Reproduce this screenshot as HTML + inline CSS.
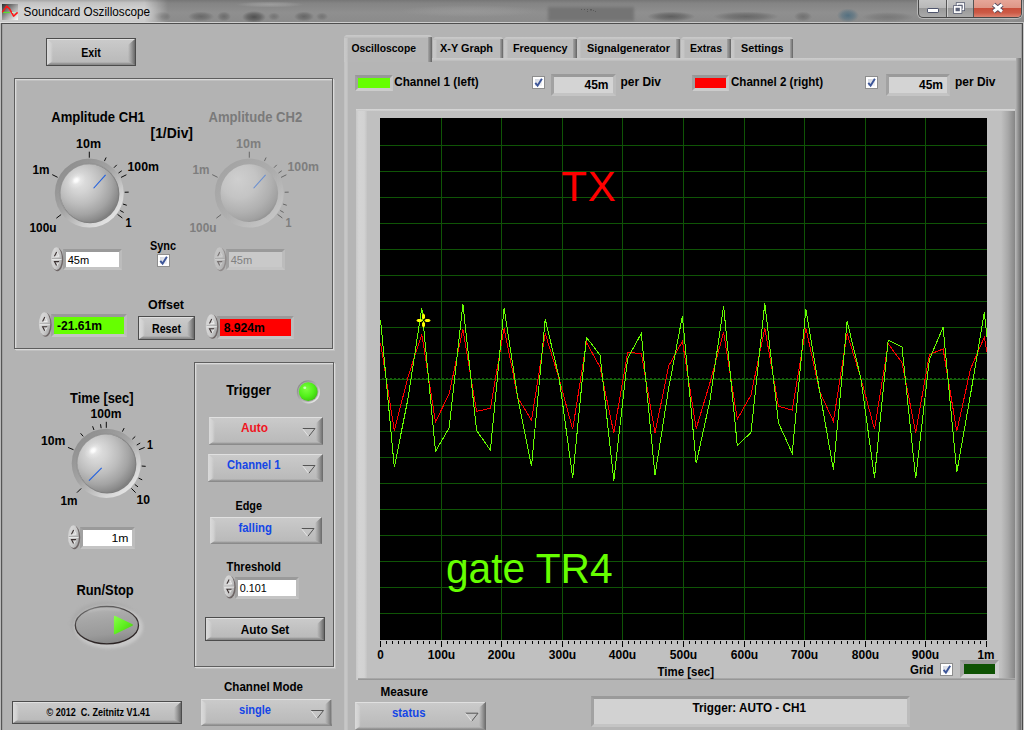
<!DOCTYPE html>
<html lang="en"><head><meta charset="utf-8"><title>Soundcard Oszilloscope</title>
<style>
html,body{margin:0;padding:0}
body{width:1024px;height:730px;position:relative;overflow:hidden;background:#b3b3b3;font-family:"Liberation Sans",sans-serif}
div,i{position:absolute;display:block;box-sizing:content-box}
svg{position:absolute;left:0;top:0}
svg text{font-family:"Liberation Sans",sans-serif;white-space:pre}
</style></head><body>
<div style="left:0px;top:0px;width:1024px;height:23px;background:radial-gradient(ellipse 9px 5px at 162px 16.5px,rgba(80,80,80,0.55) 0,rgba(80,80,80,0.33) 55%,rgba(80,80,80,0) 100%),radial-gradient(ellipse 13px 5px at 201px 16.5px,rgba(80,80,80,0.6) 0,rgba(80,80,80,0.36) 55%,rgba(80,80,80,0) 100%),radial-gradient(ellipse 7px 5px at 224px 16.5px,rgba(80,80,80,0.55) 0,rgba(80,80,80,0.33) 55%,rgba(80,80,80,0) 100%),radial-gradient(ellipse 12px 6px at 254px 17px,rgba(60,60,60,0.75) 0,rgba(60,60,60,0.45) 55%,rgba(60,60,60,0) 100%),radial-gradient(ellipse 6px 4px at 274px 16.5px,rgba(85,85,85,0.45) 0,rgba(85,85,85,0.27) 55%,rgba(85,85,85,0) 100%),radial-gradient(ellipse 10px 5px at 304px 16.5px,rgba(75,75,75,0.6) 0,rgba(75,75,75,0.36) 55%,rgba(75,75,75,0) 100%),radial-gradient(ellipse 6px 4px at 322px 16.5px,rgba(85,85,85,0.45) 0,rgba(85,85,85,0.27) 55%,rgba(85,85,85,0) 100%),radial-gradient(ellipse 34px 3px at 270px 4.5px,rgba(175,175,175,0.55) 0,rgba(175,175,175,0.33) 55%,rgba(175,175,175,0) 100%),radial-gradient(ellipse 70px 6px at 470px 11px,rgba(165,165,165,0.4) 0,rgba(165,165,165,0.24) 55%,rgba(165,165,165,0) 100%),radial-gradient(ellipse 24px 5px at 671px 16.5px,rgba(70,70,70,0.65) 0,rgba(70,70,70,0.39) 55%,rgba(70,70,70,0) 100%),radial-gradient(ellipse 33px 5px at 746px 16.5px,rgba(78,78,78,0.6) 0,rgba(78,78,78,0.36) 55%,rgba(78,78,78,0) 100%),radial-gradient(ellipse 9px 5px at 803px 16.5px,rgba(85,85,85,0.5) 0,rgba(85,85,85,0.30) 55%,rgba(85,85,85,0) 100%),radial-gradient(ellipse 11px 7px at 848px 15.5px,rgba(70,105,125,0.8) 0,rgba(70,105,125,0.48) 55%,rgba(70,105,125,0) 100%),radial-gradient(ellipse 26px 5px at 888px 17px,rgba(95,95,95,0.45) 0,rgba(95,95,95,0.27) 55%,rgba(95,95,95,0) 100%),radial-gradient(ellipse 12px 8px at 1010px 14px,rgba(170,170,170,0.5) 0,rgba(170,170,170,0.30) 55%,rgba(170,170,170,0) 100%),linear-gradient(180deg,#767676 0,#848484 14%,#8f8f8f 55%,#8a8a8a 100%);"></div>
<div style="left:548px;top:7px;width:86px;height:14px;background:#727272;filter:blur(1.6px);opacity:.9;"></div>
<div style="left:0px;top:0px;width:168px;height:23px;background:linear-gradient(180deg,#a6a6a6 0,#c2c2c2 12%,#d2d2d2 40%,#d0d0d0 80%,#c8c8c8 100%);-webkit-mask-image:linear-gradient(90deg,#000 0,#000 86%,rgba(0,0,0,.5) 93%,transparent 100%);mask-image:linear-gradient(90deg,#000 0,#000 86%,rgba(0,0,0,.5) 93%,transparent 100%);"></div>
<div style="left:0px;top:22px;width:1024px;height:1px;background:linear-gradient(90deg,#e2e2e2,#cfcfcf 20%,#c4c4c4);"></div>
<div style="left:1px;top:23px;width:1022px;height:1px;background:#4e4e4e;"></div>
<div style="left:0px;top:23px;width:1px;height:707px;background:#bababa;"></div>
<div style="left:1px;top:23px;width:1px;height:707px;background:#555;"></div>
<div style="left:2px;top:24px;width:1px;height:706px;background:#a2a2a2;"></div>
<div style="left:1021px;top:24px;width:1px;height:706px;background:#9c9c9c;"></div>
<div style="left:1022px;top:23px;width:1px;height:707px;background:#4a4a4a;"></div>
<div style="left:1023px;top:23px;width:1px;height:707px;background:#cbcbcb;"></div>
<div style="left:2px;top:4px;width:16px;height:16px;background:linear-gradient(135deg,#2c2c2c 0,#6e6e6e 30%,#a8a8a8 55%,#d8d8d8 80%,#fafafa 100%);"></div>
<div style="left:918px;top:0px;width:102px;height:17px;border:1px solid #484848;border-top:none;border-radius:0 0 5px 5px;overflow:hidden;background:linear-gradient(180deg,#c4c4c4 0,#b8b8b8 46%,#989898 48%,#aaaaaa 100%);box-shadow:0 0 0 1px rgba(220,220,220,.55);"><i style="left:27px;top:0;width:1px;height:17px;background:#555"></i><i style="left:28px;top:0;width:1px;height:17px;background:rgba(230,230,230,.6)"></i><i style="left:54px;top:0;width:1px;height:17px;background:#555"></i><i style="left:55px;top:0;width:47px;height:17px;background:linear-gradient(180deg,#e6a698 0,#de9686 46%,#c84e3a 48%,#cc5a46 75%,#dc8270 100%)"></i></div>
<div style="left:46px;top:38px;width:88px;height:26px;border:1px solid #4c4c4c;overflow:hidden;"><i style="left:0;top:0;width:88px;height:26px;background:linear-gradient(180deg,#cbcbcb 0,#c2c2c2 45%,#b8b8b8 100%)"></i><i style="left:0;bottom:0;width:88px;height:3px;background:linear-gradient(180deg,rgba(150,150,150,0),#929292 60%,#868686)"></i><i style="left:0;top:0;width:88px;height:1px;background:#e0e0e0"></i><i style="left:0;top:0;width:6px;height:26px;background:linear-gradient(90deg,#dadada,#d2d2d2 55%,rgba(200,200,200,0));clip-path:polygon(0 0,100% 5px,100% calc(100% - 4px),0 100%)"></i><i style="right:0;top:0;width:7px;height:26px;background:linear-gradient(90deg,rgba(176,176,176,0),#9c9c9c 45%,#686868);clip-path:polygon(100% 0,0 6px,0 calc(100% - 4px),100% 100%)"></i></div>
<div style="left:14px;top:78px;width:317px;height:269px;border:1px solid #5e5e5e;box-shadow:1px 1px 0 #dadada, 2px 2px 0 rgba(218,218,218,.35), inset 1px 1px 0 #dadada, inset 2px 2px 0 rgba(218,218,218,.35);"></div>
<div style="left:63px;top:249px;width:52.5px;height:15px;border:3px solid;border-color:#9a9a9a #bcbcbc #c4c4c4 #a2a2a2;background:#fff;"></div>
<div style="left:157px;top:254px;width:11px;height:11px;border:1px solid #8e8e8e;background:#fff;"><i style="left:2px;top:2px;right:2px;bottom:2px;background:linear-gradient(135deg,#d4d8e2,#f4f4f6)"></i></div>
<div style="left:226px;top:249px;width:52.5px;height:15px;border:3px solid;border-color:#9a9a9a #bcbcbc #c4c4c4 #a2a2a2;background:#c9c9c9;"></div>
<div style="left:50.5px;top:313.5px;width:70.7px;height:17.3px;border:3.5px solid;border-color:#9a9a9a #bcbcbc #c4c4c4 #a2a2a2;background:#66ff00;"></div>
<div style="left:138px;top:316px;width:55px;height:22px;border:1px solid #4c4c4c;overflow:hidden;"><i style="left:0;top:0;width:55px;height:22px;background:linear-gradient(180deg,#cbcbcb 0,#c2c2c2 45%,#b8b8b8 100%)"></i><i style="left:0;bottom:0;width:55px;height:3px;background:linear-gradient(180deg,rgba(150,150,150,0),#929292 60%,#868686)"></i><i style="left:0;top:0;width:55px;height:1px;background:#e0e0e0"></i><i style="left:0;top:0;width:6px;height:22px;background:linear-gradient(90deg,#dadada,#d2d2d2 55%,rgba(200,200,200,0));clip-path:polygon(0 0,100% 5px,100% calc(100% - 4px),0 100%)"></i><i style="right:0;top:0;width:7px;height:22px;background:linear-gradient(90deg,rgba(176,176,176,0),#9c9c9c 45%,#686868);clip-path:polygon(100% 0,0 6px,0 calc(100% - 4px),100% 100%)"></i></div>
<div style="left:217.2px;top:315.5px;width:70.5px;height:17.0px;border:3.5px solid;border-color:#9a9a9a #bcbcbc #c4c4c4 #a2a2a2;background:#ff0000;"></div>
<div style="left:80px;top:526.5px;width:48.5px;height:16px;border:3px solid;border-color:#9a9a9a #bcbcbc #c4c4c4 #a2a2a2;background:#fff;"></div>
<div style="left:12px;top:701px;width:168px;height:21px;border:1px solid #4c4c4c;overflow:hidden;"><i style="left:0;top:0;width:168px;height:21px;background:linear-gradient(180deg,#cbcbcb 0,#c2c2c2 45%,#b8b8b8 100%)"></i><i style="left:0;bottom:0;width:168px;height:3px;background:linear-gradient(180deg,rgba(150,150,150,0),#929292 60%,#868686)"></i><i style="left:0;top:0;width:168px;height:1px;background:#e0e0e0"></i><i style="left:0;top:0;width:6px;height:21px;background:linear-gradient(90deg,#dadada,#d2d2d2 55%,rgba(200,200,200,0));clip-path:polygon(0 0,100% 5px,100% calc(100% - 4px),0 100%)"></i><i style="right:0;top:0;width:7px;height:21px;background:linear-gradient(90deg,rgba(176,176,176,0),#9c9c9c 45%,#686868);clip-path:polygon(100% 0,0 6px,0 calc(100% - 4px),100% 100%)"></i></div>
<div style="left:194px;top:362px;width:138px;height:303px;border:1px solid #5e5e5e;box-shadow:1px 1px 0 #dadada, 2px 2px 0 rgba(218,218,218,.35), inset 1px 1px 0 #dadada, inset 2px 2px 0 rgba(218,218,218,.35);"></div>
<div style="left:209px;top:417px;width:114px;height:27.5px;overflow:hidden;"><i style="left:0;top:0;width:114px;height:27.5px;background:linear-gradient(180deg,#cbcbcb 0,#c2c2c2 45%,#b8b8b8 100%)"></i><i style="left:0;bottom:0;width:114px;height:3px;background:linear-gradient(180deg,rgba(150,150,150,0),#929292 60%,#868686)"></i><i style="left:0;top:0;width:114px;height:1px;background:#e0e0e0"></i><i style="left:0;top:0;width:6px;height:27.5px;background:linear-gradient(90deg,#dadada,#d2d2d2 55%,rgba(200,200,200,0));clip-path:polygon(0 0,100% 5px,100% calc(100% - 4px),0 100%)"></i><i style="right:0;top:0;width:7px;height:27.5px;background:linear-gradient(90deg,rgba(176,176,176,0),#9c9c9c 45%,#686868);clip-path:polygon(100% 0,0 6px,0 calc(100% - 4px),100% 100%)"></i></div>
<div style="left:208px;top:454px;width:115px;height:27.5px;overflow:hidden;"><i style="left:0;top:0;width:115px;height:27.5px;background:linear-gradient(180deg,#cbcbcb 0,#c2c2c2 45%,#b8b8b8 100%)"></i><i style="left:0;bottom:0;width:115px;height:3px;background:linear-gradient(180deg,rgba(150,150,150,0),#929292 60%,#868686)"></i><i style="left:0;top:0;width:115px;height:1px;background:#e0e0e0"></i><i style="left:0;top:0;width:6px;height:27.5px;background:linear-gradient(90deg,#dadada,#d2d2d2 55%,rgba(200,200,200,0));clip-path:polygon(0 0,100% 5px,100% calc(100% - 4px),0 100%)"></i><i style="right:0;top:0;width:7px;height:27.5px;background:linear-gradient(90deg,rgba(176,176,176,0),#9c9c9c 45%,#686868);clip-path:polygon(100% 0,0 6px,0 calc(100% - 4px),100% 100%)"></i></div>
<div style="left:210px;top:517px;width:112px;height:27px;overflow:hidden;"><i style="left:0;top:0;width:112px;height:27px;background:linear-gradient(180deg,#cbcbcb 0,#c2c2c2 45%,#b8b8b8 100%)"></i><i style="left:0;bottom:0;width:112px;height:3px;background:linear-gradient(180deg,rgba(150,150,150,0),#929292 60%,#868686)"></i><i style="left:0;top:0;width:112px;height:1px;background:#e0e0e0"></i><i style="left:0;top:0;width:6px;height:27px;background:linear-gradient(90deg,#dadada,#d2d2d2 55%,rgba(200,200,200,0));clip-path:polygon(0 0,100% 5px,100% calc(100% - 4px),0 100%)"></i><i style="right:0;top:0;width:7px;height:27px;background:linear-gradient(90deg,rgba(176,176,176,0),#9c9c9c 45%,#686868);clip-path:polygon(100% 0,0 6px,0 calc(100% - 4px),100% 100%)"></i></div>
<div style="left:235px;top:576.5px;width:58px;height:16px;border:3px solid;border-color:#9a9a9a #bcbcbc #c4c4c4 #a2a2a2;background:#fff;"></div>
<div style="left:205px;top:617px;width:118px;height:22px;border:1px solid #4c4c4c;overflow:hidden;"><i style="left:0;top:0;width:118px;height:22px;background:linear-gradient(180deg,#cbcbcb 0,#c2c2c2 45%,#b8b8b8 100%)"></i><i style="left:0;bottom:0;width:118px;height:3px;background:linear-gradient(180deg,rgba(150,150,150,0),#929292 60%,#868686)"></i><i style="left:0;top:0;width:118px;height:1px;background:#e0e0e0"></i><i style="left:0;top:0;width:6px;height:22px;background:linear-gradient(90deg,#dadada,#d2d2d2 55%,rgba(200,200,200,0));clip-path:polygon(0 0,100% 5px,100% calc(100% - 4px),0 100%)"></i><i style="right:0;top:0;width:7px;height:22px;background:linear-gradient(90deg,rgba(176,176,176,0),#9c9c9c 45%,#686868);clip-path:polygon(100% 0,0 6px,0 calc(100% - 4px),100% 100%)"></i></div>
<div style="left:200.5px;top:699px;width:131px;height:27px;overflow:hidden;"><i style="left:0;top:0;width:131px;height:27px;background:linear-gradient(180deg,#cbcbcb 0,#c2c2c2 45%,#b8b8b8 100%)"></i><i style="left:0;bottom:0;width:131px;height:3px;background:linear-gradient(180deg,rgba(150,150,150,0),#929292 60%,#868686)"></i><i style="left:0;top:0;width:131px;height:1px;background:#e0e0e0"></i><i style="left:0;top:0;width:6px;height:27px;background:linear-gradient(90deg,#dadada,#d2d2d2 55%,rgba(200,200,200,0));clip-path:polygon(0 0,100% 5px,100% calc(100% - 4px),0 100%)"></i><i style="right:0;top:0;width:7px;height:27px;background:linear-gradient(90deg,rgba(176,176,176,0),#9c9c9c 45%,#686868);clip-path:polygon(100% 0,0 6px,0 calc(100% - 4px),100% 100%)"></i></div>
<div style="left:344px;top:58px;width:677px;height:672px;background:#b5b5b5;"></div>
<div style="left:344px;top:58px;width:4px;height:672px;background:linear-gradient(90deg,#c0c0c0,#c9c9c9 50%,#bdbdbd);"></div>
<div style="left:344px;top:58px;width:673px;height:3px;background:linear-gradient(180deg,#cccccc,#c6c6c6 60%,#bababa);"></div>
<div style="left:1016px;top:58px;width:5px;height:672px;background:linear-gradient(90deg,#b0b0b0,#949494 40%,#6e6e6e);"></div>
<div style="left:432.5px;top:37px;width:70.5px;height:21px;background:#bababa;border-radius:4px 3px 0 0;overflow:hidden;"><i style="left:0;top:0;width:4px;height:21px;background:linear-gradient(90deg,#c8c8c8,#c6c6c6 60%,#bcbcbc)"></i><i style="left:0;top:0;width:70.5px;height:3px;background:linear-gradient(180deg,#cacaca,#c4c4c4 60%,#bababa)"></i><i style="right:0;top:2px;width:3.5px;height:19px;background:linear-gradient(90deg,#a4a4a4,#808080 60%,#626262)"></i></div>
<div style="left:503.7px;top:37px;width:73px;height:21px;background:#bababa;border-radius:4px 3px 0 0;overflow:hidden;"><i style="left:0;top:0;width:4px;height:21px;background:linear-gradient(90deg,#c8c8c8,#c6c6c6 60%,#bcbcbc)"></i><i style="left:0;top:0;width:73px;height:3px;background:linear-gradient(180deg,#cacaca,#c4c4c4 60%,#bababa)"></i><i style="right:0;top:2px;width:3.5px;height:19px;background:linear-gradient(90deg,#a4a4a4,#808080 60%,#626262)"></i></div>
<div style="left:577.3px;top:37px;width:102.7px;height:21px;background:#bababa;border-radius:4px 3px 0 0;overflow:hidden;"><i style="left:0;top:0;width:4px;height:21px;background:linear-gradient(90deg,#c8c8c8,#c6c6c6 60%,#bcbcbc)"></i><i style="left:0;top:0;width:102.7px;height:3px;background:linear-gradient(180deg,#cacaca,#c4c4c4 60%,#bababa)"></i><i style="right:0;top:2px;width:3.5px;height:19px;background:linear-gradient(90deg,#a4a4a4,#808080 60%,#626262)"></i></div>
<div style="left:680.6px;top:37px;width:50px;height:21px;background:#bababa;border-radius:4px 3px 0 0;overflow:hidden;"><i style="left:0;top:0;width:4px;height:21px;background:linear-gradient(90deg,#c8c8c8,#c6c6c6 60%,#bcbcbc)"></i><i style="left:0;top:0;width:50px;height:3px;background:linear-gradient(180deg,#cacaca,#c4c4c4 60%,#bababa)"></i><i style="right:0;top:2px;width:3.5px;height:19px;background:linear-gradient(90deg,#a4a4a4,#808080 60%,#626262)"></i></div>
<div style="left:731.4px;top:37px;width:61.8px;height:21px;background:#bababa;border-radius:4px 3px 0 0;overflow:hidden;"><i style="left:0;top:0;width:4px;height:21px;background:linear-gradient(90deg,#c8c8c8,#c6c6c6 60%,#bcbcbc)"></i><i style="left:0;top:0;width:61.8px;height:3px;background:linear-gradient(180deg,#cacaca,#c4c4c4 60%,#bababa)"></i><i style="right:0;top:2px;width:3.5px;height:19px;background:linear-gradient(90deg,#a4a4a4,#808080 60%,#626262)"></i></div>
<div style="left:344px;top:35.3px;width:87.5px;height:26.5px;background:#b6b6b6;border-radius:4px 3px 0 0;overflow:hidden;"><i style="left:0;top:0;width:4px;height:26.5px;background:linear-gradient(90deg,#c8c8c8,#c6c6c6 60%,#bcbcbc)"></i><i style="left:0;top:0;width:87.5px;height:3px;background:linear-gradient(180deg,#cacaca,#c4c4c4 60%,#bababa)"></i><i style="right:0;top:2px;width:3.5px;height:24.5px;background:linear-gradient(90deg,#a4a4a4,#808080 60%,#626262)"></i></div>
<div style="left:354.5px;top:75px;width:32px;height:10px;border:3px solid;border-color:#989898 #c6c6c6 #cccccc #a0a0a0;background:#66ff00;"></div>
<div style="left:532px;top:76px;width:11px;height:11px;border:1px solid #8e8e8e;background:#fff;"><i style="left:2px;top:2px;right:2px;bottom:2px;background:linear-gradient(135deg,#d4d8e2,#f4f4f6)"></i></div>
<div style="left:551px;top:73.5px;width:58.5px;height:16.5px;border:3px solid;border-color:#9a9a9a #bcbcbc #c4c4c4 #a2a2a2;background:#d4d4d4;"></div>
<div style="left:692px;top:75px;width:31px;height:10px;border:3px solid;border-color:#989898 #c6c6c6 #cccccc #a0a0a0;background:#ff0000;"></div>
<div style="left:865px;top:76px;width:11px;height:11px;border:1px solid #8e8e8e;background:#fff;"><i style="left:2px;top:2px;right:2px;bottom:2px;background:linear-gradient(135deg,#d4d8e2,#f4f4f6)"></i></div>
<div style="left:885.5px;top:73.5px;width:58.5px;height:16.5px;border:3px solid;border-color:#9a9a9a #bcbcbc #c4c4c4 #a2a2a2;background:#d4d4d4;"></div>
<div style="left:356px;top:109px;width:659px;height:571px;background:#c0c0c0;"></div>
<div style="left:356px;top:109px;width:11px;height:571px;background:linear-gradient(90deg,#c8c8c8,#d4d4d4 25%,#d2d2d2 75%,#c4c4c4);"></div>
<div style="left:356px;top:109px;width:659px;height:2px;background:linear-gradient(180deg,#d8d8d8,#cacaca);"></div>
<div style="left:1001px;top:111px;width:14px;height:569px;background:linear-gradient(90deg,#c0c0c0,#a8a8a8 50%,#868686);"></div>
<div style="left:358px;top:678px;width:657px;height:2px;background:linear-gradient(180deg,#b0b0b0,#8e8e8e);"></div>
<div style="left:380px;top:118px;width:607px;height:522px;background:#000;"></div>
<div style="left:940.3px;top:663px;width:11px;height:11px;border:1px solid #8e8e8e;background:#fff;"><i style="left:2px;top:2px;right:2px;bottom:2px;background:linear-gradient(135deg,#d4d8e2,#f4f4f6)"></i></div>
<div style="left:959.7px;top:660.2px;width:31.1px;height:9.600000000000001px;border:4px solid;border-color:#9c9c9c #cecece #d4d4d4 #a6a6a6;background:#0e5203;"></div>
<div style="left:354.5px;top:701.7px;width:131.5px;height:28.3px;overflow:hidden;"><i style="left:0;top:0;width:131.5px;height:28.3px;background:linear-gradient(180deg,#cbcbcb 0,#c2c2c2 45%,#b8b8b8 100%)"></i><i style="left:0;bottom:0;width:131.5px;height:3px;background:linear-gradient(180deg,rgba(150,150,150,0),#929292 60%,#868686)"></i><i style="left:0;top:0;width:131.5px;height:1px;background:#e0e0e0"></i><i style="left:0;top:0;width:6px;height:28.3px;background:linear-gradient(90deg,#dadada,#d2d2d2 55%,rgba(200,200,200,0));clip-path:polygon(0 0,100% 5px,100% calc(100% - 4px),0 100%)"></i><i style="right:0;top:0;width:7px;height:28.3px;background:linear-gradient(90deg,rgba(176,176,176,0),#9c9c9c 45%,#686868);clip-path:polygon(100% 0,0 6px,0 calc(100% - 4px),100% 100%)"></i></div>
<div style="left:590.5px;top:695.5px;width:313.5px;height:25px;border:3px solid;border-color:#9a9a9a #bcbcbc #c4c4c4 #a2a2a2;background:#d2d2d2;"></div>
<svg width="1024" height="730" viewBox="0 0 1024 730"><defs>
<radialGradient id="dome" cx="0.38" cy="0.36" r="0.74" fx="0.31" fy="0.29">
 <stop offset="0" stop-color="#e4e4e4"/><stop offset="0.25" stop-color="#d3d3d3"/>
 <stop offset="0.5" stop-color="#bdbdbd"/><stop offset="0.72" stop-color="#a4a4a4"/><stop offset="0.88" stop-color="#8a8a8a"/><stop offset="1" stop-color="#6c6c6c"/>
</radialGradient>
<radialGradient id="domed" cx="0.36" cy="0.32" r="0.75" fx="0.30" fy="0.26">
 <stop offset="0" stop-color="#cfcfcf"/><stop offset="0.4" stop-color="#c4c4c4"/>
 <stop offset="0.72" stop-color="#b0b0b0"/><stop offset="0.9" stop-color="#a0a0a0"/><stop offset="1" stop-color="#8e8e8e"/>
</radialGradient>
<linearGradient id="ring" x1="0.15" y1="0.1" x2="0.85" y2="0.9">
 <stop offset="0" stop-color="#8e8e8e"/><stop offset="0.45" stop-color="#a4a4a4"/><stop offset="0.8" stop-color="#d2d2d2"/><stop offset="1" stop-color="#e6e6e6"/>
</linearGradient>
<linearGradient id="ringd" x1="0.15" y1="0.1" x2="0.85" y2="0.9">
 <stop offset="0" stop-color="#a4a4a4"/><stop offset="0.5" stop-color="#adadad"/><stop offset="1" stop-color="#c6c6c6"/>
</linearGradient>
<radialGradient id="spec2"><stop offset="0" stop-color="#f2f2f2" stop-opacity="0.55"/><stop offset="0.6" stop-color="#ececec" stop-opacity="0.35"/><stop offset="1" stop-color="#e6e6e6" stop-opacity="0"/></radialGradient>
<radialGradient id="spec"><stop offset="0" stop-color="#fff"/><stop offset="0.35" stop-color="#fbfbfb" stop-opacity="0.95"/><stop offset="0.6" stop-color="#f2f2f2" stop-opacity="0.7"/><stop offset="1" stop-color="#e0e0e0" stop-opacity="0"/></radialGradient>
<linearGradient id="spin" x1="0" y1="0" x2="1" y2="0.5">
 <stop offset="0" stop-color="#c8c8c8"/><stop offset="0.3" stop-color="#d6d6d6"/><stop offset="0.7" stop-color="#cacaca"/><stop offset="1" stop-color="#b0b0b0"/>
</linearGradient>
<radialGradient id="led" cx="0.4" cy="0.36" r="0.72"><stop offset="0" stop-color="#7dff40"/><stop offset="0.55" stop-color="#52f01a"/><stop offset="0.85" stop-color="#42d012"/><stop offset="1" stop-color="#36a80e"/></radialGradient>
<linearGradient id="oval" x1="0.3" y1="0" x2="0.5" y2="1"><stop offset="0" stop-color="#b4b4b4"/><stop offset="0.35" stop-color="#a6a6a6"/><stop offset="0.75" stop-color="#9a9a9a"/><stop offset="1" stop-color="#868686"/></linearGradient>
<linearGradient id="ledring" x1="0.15" y1="0.15" x2="0.85" y2="0.85"><stop offset="0" stop-color="#8c8c8c"/><stop offset="0.5" stop-color="#b0b0b0"/><stop offset="1" stop-color="#e6e6e6"/></linearGradient>
<linearGradient id="ovalst" x1="0.2" y1="0" x2="0.6" y2="1"><stop offset="0" stop-color="#6a6a6a"/><stop offset="0.5" stop-color="#3a3434"/><stop offset="1" stop-color="#2a2222"/></linearGradient>
<linearGradient id="tri" x1="0" y1="0" x2="1" y2="1"><stop offset="0" stop-color="#86ff48"/><stop offset="0.5" stop-color="#60f020"/><stop offset="1" stop-color="#48c80e"/></linearGradient>
<filter id="b1" x="-20%" y="-50%" width="140%" height="200%"><feGaussianBlur stdDeviation="0.8"/></filter>
<filter id="b2" x="-20%" y="-20%" width="140%" height="140%"><feGaussianBlur stdDeviation="1.6"/></filter>
<clipPath id="plotclip"><rect x="380" y="118" width="607" height="522"/></clipPath>
</defs>
<g fill="#5a5a5a"><rect x="581" y="9" width="1" height="1"/><rect x="584" y="9" width="1" height="1"/><rect x="587" y="9" width="1" height="1"/><rect x="590" y="9" width="2" height="1.5"/><rect x="593" y="10" width="1" height="1"/><rect x="587" y="11" width="1" height="1"/><rect x="595" y="11" width="1" height="1"/></g>
<path d="M2.3,12.4 L6.6,6.1 L9.4,8.6 L13.6,16.2 L17.6,12.4" fill="none" stroke="#ff1414" stroke-width="1.5" stroke-linejoin="round"/>
<path d="M3.2,12.5 L9.8,12.5" stroke="#5ade30" stroke-width="1.3"/>
<path d="M12,12.5 L15.6,12.5" stroke="#b8f0c8" stroke-width="1"/>
<text x="23.6" y="16" font-size="12" fill="#000" textLength="126.5" lengthAdjust="spacingAndGlyphs">Soundcard Oszilloscope</text>
<rect x="927.5" y="8.5" width="11" height="4" rx="0.6" fill="#fff" stroke="#4e546c" stroke-width="1"/>
<g fill="none"><rect x="957.4" y="3.9" width="6" height="5.6" stroke="#4e546c" stroke-width="3.1"/><rect x="957.4" y="3.9" width="6" height="5.6" stroke="#fff" stroke-width="1.6"/></g>
<g><rect x="954.7" y="6.9" width="6" height="5.2" fill="#aeaeae" stroke="#4e546c" stroke-width="3.1"/><rect x="954.7" y="6.9" width="6" height="5.2" fill="#5c6278" stroke="#fff" stroke-width="1.7"/></g>
<g fill="none" stroke-linecap="butt"><path d="M993.6,4.7 L1002,11.5 M1002,4.7 L993.6,11.5" stroke="#50485c" stroke-width="4.8"/><path d="M993.6,4.7 L1002,11.5 M1002,4.7 L993.6,11.5" stroke="#fff" stroke-width="2.9"/></g>
<text x="81.25" y="56.8" font-size="12" font-weight="700" fill="#000" textLength="19.5" lengthAdjust="spacingAndGlyphs">Exit</text>
<text x="51.2" y="122" font-size="14" font-weight="700" fill="#000" textLength="93.7" lengthAdjust="spacingAndGlyphs">Amplitude CH1</text>
<text x="150.5" y="138" font-size="14" font-weight="700" fill="#000" textLength="42.5" lengthAdjust="spacingAndGlyphs">[1/Div]</text>
<text x="208.5" y="122" font-size="14" font-weight="700" fill="#7a7a7a" textLength="93.7" lengthAdjust="spacingAndGlyphs">Amplitude CH2</text>
<g><line x1="61.14" y1="214.55" x2="56.37" y2="218.19" stroke="#0a0a0a" stroke-width="1"/><line x1="57.62" y1="177.30" x2="52.25" y2="174.63" stroke="#0a0a0a" stroke-width="1"/><line x1="89.30" y1="157.70" x2="89.30" y2="151.70" stroke="#0a0a0a" stroke-width="1"/><line x1="121.04" y1="177.42" x2="126.41" y2="174.76" stroke="#0a0a0a" stroke-width="1"/><line x1="117.57" y1="214.40" x2="122.36" y2="218.02" stroke="#0a0a0a" stroke-width="1"/><line x1="104.43" y1="161.10" x2="106.14" y2="157.48" stroke="#0a0a0a" stroke-width="1"/><line x1="113.98" y1="167.72" x2="116.77" y2="164.85" stroke="#0a0a0a" stroke-width="1"/><line x1="118.47" y1="173.05" x2="121.77" y2="170.78" stroke="#0a0a0a" stroke-width="1"/><line x1="124.69" y1="192.24" x2="128.69" y2="192.14" stroke="#0a0a0a" stroke-width="1"/><line x1="122.97" y1="204.04" x2="126.77" y2="205.28" stroke="#0a0a0a" stroke-width="1"/><line x1="120.14" y1="210.48" x2="123.63" y2="212.44" stroke="#0a0a0a" stroke-width="1"/></g><circle cx="89.3" cy="193.1" r="34.5" fill="url(#ring)"/><circle cx="90.1" cy="193.9" r="29.3" fill="#5e5e5e" opacity="0.75"/><circle cx="88.8" cy="192.6" r="29.400000000000002" fill="none" stroke="#909090" stroke-width="0.8" opacity="0.7"/><circle cx="89.3" cy="193.1" r="28.8" fill="url(#dome)"/><ellipse cx="76.7" cy="180.7" rx="10" ry="7.6" fill="url(#spec2)" transform="rotate(-40 76.7 180.7)"/><ellipse cx="76.3" cy="180.29999999999998" rx="6" ry="4.6" fill="url(#spec)" transform="rotate(-40 76.3 180.29999999999998)"/><line x1="93.62" y1="188.25" x2="105.60" y2="174.81" stroke="#1f5fe0" stroke-width="1.1"/>
<g opacity="0.45"><line x1="221.14" y1="214.55" x2="216.37" y2="218.19" stroke="#0a0a0a" stroke-width="1"/><line x1="217.62" y1="177.30" x2="212.25" y2="174.63" stroke="#0a0a0a" stroke-width="1"/><line x1="249.30" y1="157.70" x2="249.30" y2="151.70" stroke="#0a0a0a" stroke-width="1"/><line x1="281.04" y1="177.42" x2="286.41" y2="174.76" stroke="#0a0a0a" stroke-width="1"/><line x1="277.57" y1="214.40" x2="282.36" y2="218.02" stroke="#0a0a0a" stroke-width="1"/><line x1="264.43" y1="161.10" x2="266.14" y2="157.48" stroke="#0a0a0a" stroke-width="1"/><line x1="273.98" y1="167.72" x2="276.77" y2="164.85" stroke="#0a0a0a" stroke-width="1"/><line x1="278.47" y1="173.05" x2="281.77" y2="170.78" stroke="#0a0a0a" stroke-width="1"/><line x1="284.69" y1="192.24" x2="288.69" y2="192.14" stroke="#0a0a0a" stroke-width="1"/><line x1="282.97" y1="204.04" x2="286.77" y2="205.28" stroke="#0a0a0a" stroke-width="1"/><line x1="280.14" y1="210.48" x2="283.63" y2="212.44" stroke="#0a0a0a" stroke-width="1"/></g><circle cx="249.3" cy="193.1" r="34.5" fill="url(#ringd)"/><circle cx="249.3" cy="193.1" r="28.8" fill="url(#domed)"/><line x1="253.62" y1="188.25" x2="265.60" y2="174.81" stroke="#6a8fd0" stroke-width="1.1"/>
<text x="76" y="147.6" font-size="12" font-weight="700" fill="#000" textLength="25" lengthAdjust="spacingAndGlyphs">10m</text>
<text x="32.5" y="174" font-size="12" font-weight="700" fill="#000" textLength="17" lengthAdjust="spacingAndGlyphs">1m</text>
<text x="127.5" y="170.5" font-size="12" font-weight="700" fill="#000" textLength="31.5" lengthAdjust="spacingAndGlyphs">100m</text>
<text x="29.5" y="232" font-size="12" font-weight="700" fill="#000" textLength="27" lengthAdjust="spacingAndGlyphs">100u</text>
<text x="125.5" y="226.5" font-size="12" font-weight="700" fill="#000" textLength="6" lengthAdjust="spacingAndGlyphs">1</text>
<text x="236" y="147.6" font-size="12" font-weight="700" fill="#7e7e7e" textLength="25" lengthAdjust="spacingAndGlyphs">10m</text>
<text x="192.5" y="174" font-size="12" font-weight="700" fill="#7e7e7e" textLength="17" lengthAdjust="spacingAndGlyphs">1m</text>
<text x="287.5" y="170.5" font-size="12" font-weight="700" fill="#7e7e7e" textLength="31.5" lengthAdjust="spacingAndGlyphs">100m</text>
<text x="189.5" y="232" font-size="12" font-weight="700" fill="#7e7e7e" textLength="27" lengthAdjust="spacingAndGlyphs">100u</text>
<text x="285.5" y="226.5" font-size="12" font-weight="700" fill="#7e7e7e" textLength="6" lengthAdjust="spacingAndGlyphs">1</text>
<g><ellipse cx="57.45" cy="259.6" rx="5.75" ry="11.7" fill="#6e6666"/><ellipse cx="56.45" cy="258.7" rx="5.45" ry="11.399999999999999" fill="url(#spin)"/><line x1="51.8" y1="258.6" x2="61.5" y2="258.6" stroke="#a6a6a6" stroke-width="0.9"/><line x1="51.8" y1="259.5" x2="61.5" y2="259.5" stroke="#ececec" stroke-width="0.9"/><path d="M56.85,252.0 L59.15,256.2 L54.55,256.2" fill="none" stroke="#f2f2f2" stroke-width="0.9"/><path d="M54.45,256.2 L56.65,251.9" fill="none" stroke="#3a3030" stroke-width="1.1"/><path d="M59.15,261.6 L56.75,265.8" fill="none" stroke="#f2f2f2" stroke-width="0.9"/><path d="M59.15,261.6 L54.45,261.6 L56.55,265.6" fill="none" stroke="#3a3030" stroke-width="1.1"/></g>
<text x="67.7" y="263.8" font-size="11.7" fill="#000" textLength="21.5" lengthAdjust="spacingAndGlyphs">45m</text>
<text x="150" y="249.6" font-size="12" font-weight="700" fill="#000" textLength="26" lengthAdjust="spacingAndGlyphs">Sync</text>
<path d="M160.3,260.8 L162.6,263.6 L166.9,256.8" fill="none" stroke="#3c5598" stroke-width="1.9" stroke-linejoin="miter"/>
<g opacity="0.5"><ellipse cx="220.64999999999998" cy="259.6" rx="5.75" ry="11.7" fill="#6e6666"/><ellipse cx="219.64999999999998" cy="258.7" rx="5.45" ry="11.399999999999999" fill="url(#spin)"/><line x1="215.0" y1="258.6" x2="224.7" y2="258.6" stroke="#a6a6a6" stroke-width="0.9"/><line x1="215.0" y1="259.5" x2="224.7" y2="259.5" stroke="#ececec" stroke-width="0.9"/><path d="M220.04999999999998,252.0 L222.35,256.2 L217.75,256.2" fill="none" stroke="#f2f2f2" stroke-width="0.9"/><path d="M217.64999999999998,256.2 L219.85,251.9" fill="none" stroke="#3a3030" stroke-width="1.1"/><path d="M222.35,261.6 L219.95,265.8" fill="none" stroke="#f2f2f2" stroke-width="0.9"/><path d="M222.35,261.6 L217.64999999999998,261.6 L219.75,265.6" fill="none" stroke="#3a3030" stroke-width="1.1"/></g>
<text x="230.7" y="263.8" font-size="11.7" fill="#808080" textLength="21.5" lengthAdjust="spacingAndGlyphs">45m</text>
<text x="148" y="309" font-size="12" font-weight="700" fill="#000" textLength="36" lengthAdjust="spacingAndGlyphs">Offset</text>
<g><ellipse cx="45.6" cy="324.8" rx="6.0" ry="12.0" fill="#6e6666"/><ellipse cx="44.6" cy="323.9" rx="5.7" ry="11.7" fill="url(#spin)"/><line x1="39.699999999999996" y1="323.8" x2="49.9" y2="323.8" stroke="#a6a6a6" stroke-width="0.9"/><line x1="39.699999999999996" y1="324.7" x2="49.9" y2="324.7" stroke="#ececec" stroke-width="0.9"/><path d="M45.0,317.2 L47.3,321.4 L42.699999999999996,321.4" fill="none" stroke="#f2f2f2" stroke-width="0.9"/><path d="M42.6,321.4 L44.8,317.09999999999997" fill="none" stroke="#3a3030" stroke-width="1.1"/><path d="M47.3,326.8 L44.9,331.0" fill="none" stroke="#f2f2f2" stroke-width="0.9"/><path d="M47.3,326.8 L42.6,326.8 L44.699999999999996,330.8" fill="none" stroke="#3a3030" stroke-width="1.1"/></g>
<text x="57" y="330.2" font-size="13" font-weight="700" fill="#000" textLength="45" lengthAdjust="spacingAndGlyphs">-21.61m</text>
<text x="152.0" y="333" font-size="12" font-weight="700" fill="#000" textLength="29" lengthAdjust="spacingAndGlyphs">Reset</text>
<g><ellipse cx="212.5" cy="326.8" rx="6.0" ry="12.0" fill="#6e6666"/><ellipse cx="211.5" cy="325.9" rx="5.7" ry="11.7" fill="url(#spin)"/><line x1="206.60000000000002" y1="325.8" x2="216.8" y2="325.8" stroke="#a6a6a6" stroke-width="0.9"/><line x1="206.60000000000002" y1="326.7" x2="216.8" y2="326.7" stroke="#ececec" stroke-width="0.9"/><path d="M211.9,319.2 L214.20000000000002,323.4 L209.60000000000002,323.4" fill="none" stroke="#f2f2f2" stroke-width="0.9"/><path d="M209.5,323.4 L211.70000000000002,319.09999999999997" fill="none" stroke="#3a3030" stroke-width="1.1"/><path d="M214.20000000000002,328.8 L211.8,333.0" fill="none" stroke="#f2f2f2" stroke-width="0.9"/><path d="M214.20000000000002,328.8 L209.5,328.8 L211.60000000000002,332.8" fill="none" stroke="#3a3030" stroke-width="1.1"/></g>
<text x="223.7" y="331.5" font-size="13" font-weight="700" fill="#000" textLength="41.2" lengthAdjust="spacingAndGlyphs">8.924m</text>
<text x="70" y="402.5" font-size="14" font-weight="700" fill="#000" textLength="63.5" lengthAdjust="spacingAndGlyphs">Time [sec]</text>
<g><line x1="81.20" y1="488.40" x2="76.96" y2="492.64" stroke="#0a0a0a" stroke-width="1"/><line x1="73.50" y1="449.71" x2="67.96" y2="447.42" stroke="#0a0a0a" stroke-width="1"/><line x1="106.30" y1="427.80" x2="106.30" y2="421.80" stroke="#0a0a0a" stroke-width="1"/><line x1="139.10" y1="449.71" x2="144.64" y2="447.42" stroke="#0a0a0a" stroke-width="1"/><line x1="131.40" y1="488.40" x2="135.64" y2="492.64" stroke="#0a0a0a" stroke-width="1"/><line x1="83.20" y1="436.35" x2="80.59" y2="433.31" stroke="#0a0a0a" stroke-width="1"/><line x1="93.98" y1="430.00" x2="92.60" y2="426.25" stroke="#0a0a0a" stroke-width="1"/><line x1="101.11" y1="428.18" x2="100.53" y2="424.22" stroke="#0a0a0a" stroke-width="1"/><line x1="122.36" y1="431.64" x2="124.17" y2="428.07" stroke="#0a0a0a" stroke-width="1"/><line x1="132.35" y1="439.18" x2="135.28" y2="436.46" stroke="#0a0a0a" stroke-width="1"/><line x1="136.76" y1="445.07" x2="140.19" y2="443.02" stroke="#0a0a0a" stroke-width="1"/><line x1="141.70" y1="466.02" x2="145.68" y2="466.33" stroke="#0a0a0a" stroke-width="1"/><line x1="138.55" y1="478.13" x2="142.19" y2="479.81" stroke="#0a0a0a" stroke-width="1"/><line x1="134.80" y1="484.47" x2="138.01" y2="486.85" stroke="#0a0a0a" stroke-width="1"/></g><circle cx="106.3" cy="463.3" r="34.6" fill="url(#ring)"/><circle cx="107.1" cy="464.1" r="29.3" fill="#5e5e5e" opacity="0.75"/><circle cx="105.8" cy="462.8" r="29.400000000000002" fill="none" stroke="#909090" stroke-width="0.8" opacity="0.7"/><circle cx="106.3" cy="463.3" r="28.8" fill="url(#dome)"/><ellipse cx="93.7" cy="450.90000000000003" rx="10" ry="7.6" fill="url(#spec2)" transform="rotate(-40 93.7 450.90000000000003)"/><ellipse cx="93.3" cy="450.5" rx="6" ry="4.6" fill="url(#spec)" transform="rotate(-40 93.3 450.5)"/><line x1="101.70" y1="467.90" x2="88.98" y2="480.62" stroke="#1f5fe0" stroke-width="1.1"/>
<text x="90.5" y="418.3" font-size="12" font-weight="700" fill="#000" textLength="31" lengthAdjust="spacingAndGlyphs">100m</text>
<text x="41" y="445.4" font-size="12" font-weight="700" fill="#000" textLength="24.5" lengthAdjust="spacingAndGlyphs">10m</text>
<text x="147" y="449" font-size="12" font-weight="700" fill="#000" textLength="6" lengthAdjust="spacingAndGlyphs">1</text>
<text x="60.5" y="505" font-size="12" font-weight="700" fill="#000" textLength="17" lengthAdjust="spacingAndGlyphs">1m</text>
<text x="136.5" y="504" font-size="12" font-weight="700" fill="#000" textLength="13.5" lengthAdjust="spacingAndGlyphs">10</text>
<g><ellipse cx="74.45" cy="537.6" rx="5.75" ry="11.7" fill="#6e6666"/><ellipse cx="73.45" cy="536.7" rx="5.45" ry="11.399999999999999" fill="url(#spin)"/><line x1="68.8" y1="536.6" x2="78.5" y2="536.6" stroke="#a6a6a6" stroke-width="0.9"/><line x1="68.8" y1="537.5" x2="78.5" y2="537.5" stroke="#ececec" stroke-width="0.9"/><path d="M73.85,530.0 L76.15,534.2 L71.55,534.2" fill="none" stroke="#f2f2f2" stroke-width="0.9"/><path d="M71.45,534.2 L73.65,529.9" fill="none" stroke="#3a3030" stroke-width="1.1"/><path d="M76.15,539.6 L73.75,543.8" fill="none" stroke="#f2f2f2" stroke-width="0.9"/><path d="M76.15,539.6 L71.45,539.6 L73.55,543.6" fill="none" stroke="#3a3030" stroke-width="1.1"/></g>
<text x="111.5" y="541.7" font-size="11.7" fill="#000" textLength="17" lengthAdjust="spacingAndGlyphs">1m</text>
<text x="76.4" y="594.8" font-size="14" font-weight="700" fill="#000" textLength="57.3" lengthAdjust="spacingAndGlyphs">Run/Stop</text>
<ellipse cx="105.6" cy="623.6" rx="35" ry="22" fill="#a4a4a4" opacity="0.55" filter="url(#b2)"/>
<ellipse cx="108.6" cy="627" rx="34.5" ry="21.5" fill="#cdcdcd" opacity="0.8" filter="url(#b2)"/>
<ellipse cx="106.9" cy="625.2" rx="31.6" ry="18.7" fill="url(#oval)" stroke="url(#ovalst)" stroke-width="1.3"/>
<path d="M88,611.5 C96,608.6 112,608.3 120,610" fill="none" stroke="#c4c4c4" stroke-width="1.6" opacity=".8" filter="url(#b1)"/>
<path d="M114.6,616.4 L132.2,625 L114.6,633.6 Z" fill="url(#tri)" stroke="url(#tri)" stroke-width="1.4" stroke-linejoin="round"/>
<text x="46.6" y="716.3" font-size="10.2" font-weight="700" fill="#000" textLength="103.5" lengthAdjust="spacingAndGlyphs">© 2012  C. Zeitnitz V1.41</text>
<text x="226.2" y="394.6" font-size="14" font-weight="700" fill="#000" textLength="44.8" lengthAdjust="spacingAndGlyphs">Trigger</text>
<circle cx="308.4" cy="391.9" r="11.6" fill="url(#ledring)"/><circle cx="308.2" cy="391.7" r="10.2" fill="#a8a8a8"/><circle cx="308.2" cy="391.7" r="9.4" fill="url(#led)"/><ellipse cx="304.8" cy="387.8" rx="1.5" ry="1.2" fill="#d8ffc8" opacity=".85"/>
<text x="241" y="432" font-size="12" font-weight="700" fill="#f0141e" textLength="27" lengthAdjust="spacingAndGlyphs">Auto</text>
<path d="M302.4,428.5 L315.0,428.5 L308.7,436.5 Z" fill="#c4c4c4" stroke="none"/>
<path d="M302.4,428.5 L315.0,428.5 L308.7,436.5" fill="none" stroke="#555" stroke-width="1"/>
<path d="M308.7,436.5 L302.4,428.5" fill="none" stroke="#e4e4e4" stroke-width="1"/>
<text x="227" y="469" font-size="12" font-weight="700" fill="#1446e6" textLength="53.5" lengthAdjust="spacingAndGlyphs">Channel 1</text>
<path d="M302.4,465.5 L315.0,465.5 L308.7,473.5 Z" fill="#c4c4c4" stroke="none"/>
<path d="M302.4,465.5 L315.0,465.5 L308.7,473.5" fill="none" stroke="#555" stroke-width="1"/>
<path d="M308.7,473.5 L302.4,465.5" fill="none" stroke="#e4e4e4" stroke-width="1"/>
<text x="235.5" y="510" font-size="12" font-weight="700" fill="#000" textLength="26.5" lengthAdjust="spacingAndGlyphs">Edge</text>
<text x="238.5" y="531.5" font-size="12" font-weight="700" fill="#1446e6" textLength="33.5" lengthAdjust="spacingAndGlyphs">falling</text>
<path d="M301.4,528.5 L314.0,528.5 L307.7,536.5 Z" fill="#c4c4c4" stroke="none"/>
<path d="M301.4,528.5 L314.0,528.5 L307.7,536.5" fill="none" stroke="#555" stroke-width="1"/>
<path d="M307.7,536.5 L301.4,528.5" fill="none" stroke="#e4e4e4" stroke-width="1"/>
<text x="226.5" y="571" font-size="12" font-weight="700" fill="#000" textLength="54.5" lengthAdjust="spacingAndGlyphs">Threshold</text>
<g><ellipse cx="229.95" cy="587.1999999999999" rx="5.75" ry="11.3" fill="#6e6666"/><ellipse cx="228.95" cy="586.3" rx="5.45" ry="11.0" fill="url(#spin)"/><line x1="224.3" y1="586.1999999999999" x2="234.0" y2="586.1999999999999" stroke="#a6a6a6" stroke-width="0.9"/><line x1="224.3" y1="587.0999999999999" x2="234.0" y2="587.0999999999999" stroke="#ececec" stroke-width="0.9"/><path d="M229.35,579.5999999999999 L231.65,583.8 L227.05,583.8" fill="none" stroke="#f2f2f2" stroke-width="0.9"/><path d="M226.95,583.8 L229.15,579.4999999999999" fill="none" stroke="#3a3030" stroke-width="1.1"/><path d="M231.65,589.1999999999999 L229.25,593.3999999999999" fill="none" stroke="#f2f2f2" stroke-width="0.9"/><path d="M231.65,589.1999999999999 L226.95,589.1999999999999 L229.05,593.1999999999999" fill="none" stroke="#3a3030" stroke-width="1.1"/></g>
<text x="239.7" y="591.6" font-size="11.7" fill="#000" textLength="27" lengthAdjust="spacingAndGlyphs">0.101</text>
<text x="240.75" y="634" font-size="12" font-weight="700" fill="#000" textLength="48.5" lengthAdjust="spacingAndGlyphs">Auto Set</text>
<text x="224" y="691" font-size="12" font-weight="700" fill="#000" textLength="79" lengthAdjust="spacingAndGlyphs">Channel Mode</text>
<text x="239" y="713.6" font-size="12" font-weight="700" fill="#1446e6" textLength="32" lengthAdjust="spacingAndGlyphs">single</text>
<path d="M310.9,710.5 L323.5,710.5 L317.2,718.5 Z" fill="#c4c4c4" stroke="none"/>
<path d="M310.9,710.5 L323.5,710.5 L317.2,718.5" fill="none" stroke="#555" stroke-width="1"/>
<path d="M317.2,718.5 L310.9,710.5" fill="none" stroke="#e4e4e4" stroke-width="1"/>
<text x="440" y="52" font-size="11.4" font-weight="700" fill="#000" textLength="53" lengthAdjust="spacingAndGlyphs">X-Y Graph</text>
<text x="513" y="52" font-size="11.4" font-weight="700" fill="#000" textLength="54.5" lengthAdjust="spacingAndGlyphs">Frequency</text>
<text x="587" y="52" font-size="11.4" font-weight="700" fill="#000" textLength="83" lengthAdjust="spacingAndGlyphs">Signalgenerator</text>
<text x="690" y="52" font-size="11.4" font-weight="700" fill="#000" textLength="32" lengthAdjust="spacingAndGlyphs">Extras</text>
<text x="741" y="52" font-size="11.4" font-weight="700" fill="#000" textLength="42.5" lengthAdjust="spacingAndGlyphs">Settings</text>
<text x="351.5" y="52" font-size="11.4" font-weight="700" fill="#000" textLength="64.5" lengthAdjust="spacingAndGlyphs">Oscilloscope</text>
<text x="394.2" y="85.8" font-size="12" font-weight="700" fill="#000" textLength="84.5" lengthAdjust="spacingAndGlyphs">Channel 1 (left)</text>
<path d="M535.3,82.8 L537.6,85.6 L541.9,78.8" fill="none" stroke="#3c5598" stroke-width="1.9" stroke-linejoin="miter"/>
<text x="584.5" y="88.9" font-size="12.5" font-weight="700" fill="#000" textLength="24" lengthAdjust="spacingAndGlyphs">45m</text>
<text x="620.5" y="85.8" font-size="12" font-weight="700" fill="#000" textLength="40.5" lengthAdjust="spacingAndGlyphs">per Div</text>
<text x="731" y="85.8" font-size="12" font-weight="700" fill="#000" textLength="92" lengthAdjust="spacingAndGlyphs">Channel 2 (right)</text>
<path d="M868.3,82.8 L870.6,85.6 L874.9,78.8" fill="none" stroke="#3c5598" stroke-width="1.9" stroke-linejoin="miter"/>
<text x="919" y="88.9" font-size="12.5" font-weight="700" fill="#000" textLength="24" lengthAdjust="spacingAndGlyphs">45m</text>
<text x="955" y="85.8" font-size="12" font-weight="700" fill="#000" textLength="40.5" lengthAdjust="spacingAndGlyphs">per Div</text>
<g shape-rendering="crispEdges" fill="#0f5406"><rect x="380" y="145" width="607" height="1"/><rect x="380" y="171" width="607" height="1"/><rect x="380" y="197" width="607" height="1"/><rect x="380" y="223" width="607" height="1"/><rect x="380" y="249" width="607" height="1"/><rect x="380" y="275" width="607" height="1"/><rect x="380" y="301" width="607" height="1"/><rect x="380" y="327" width="607" height="1"/><rect x="380" y="353" width="607" height="1"/><rect x="380" y="379" width="607" height="1" fill="#14600a"/><rect x="382" y="378" width="2" height="1" fill="#14600a"/><rect x="386" y="378" width="2" height="1" fill="#14600a"/><rect x="390" y="378" width="2" height="1" fill="#14600a"/><rect x="394" y="378" width="2" height="1" fill="#14600a"/><rect x="398" y="378" width="2" height="1" fill="#14600a"/><rect x="402" y="378" width="2" height="1" fill="#14600a"/><rect x="406" y="378" width="2" height="1" fill="#14600a"/><rect x="410" y="378" width="2" height="1" fill="#14600a"/><rect x="414" y="378" width="2" height="1" fill="#14600a"/><rect x="418" y="378" width="2" height="1" fill="#14600a"/><rect x="422" y="378" width="2" height="1" fill="#14600a"/><rect x="426" y="378" width="2" height="1" fill="#14600a"/><rect x="430" y="378" width="2" height="1" fill="#14600a"/><rect x="434" y="378" width="2" height="1" fill="#14600a"/><rect x="438" y="378" width="2" height="1" fill="#14600a"/><rect x="442" y="378" width="2" height="1" fill="#14600a"/><rect x="446" y="378" width="2" height="1" fill="#14600a"/><rect x="450" y="378" width="2" height="1" fill="#14600a"/><rect x="454" y="378" width="2" height="1" fill="#14600a"/><rect x="458" y="378" width="2" height="1" fill="#14600a"/><rect x="462" y="378" width="2" height="1" fill="#14600a"/><rect x="466" y="378" width="2" height="1" fill="#14600a"/><rect x="470" y="378" width="2" height="1" fill="#14600a"/><rect x="474" y="378" width="2" height="1" fill="#14600a"/><rect x="478" y="378" width="2" height="1" fill="#14600a"/><rect x="482" y="378" width="2" height="1" fill="#14600a"/><rect x="486" y="378" width="2" height="1" fill="#14600a"/><rect x="490" y="378" width="2" height="1" fill="#14600a"/><rect x="494" y="378" width="2" height="1" fill="#14600a"/><rect x="498" y="378" width="2" height="1" fill="#14600a"/><rect x="502" y="378" width="2" height="1" fill="#14600a"/><rect x="506" y="378" width="2" height="1" fill="#14600a"/><rect x="510" y="378" width="2" height="1" fill="#14600a"/><rect x="514" y="378" width="2" height="1" fill="#14600a"/><rect x="518" y="378" width="2" height="1" fill="#14600a"/><rect x="522" y="378" width="2" height="1" fill="#14600a"/><rect x="526" y="378" width="2" height="1" fill="#14600a"/><rect x="530" y="378" width="2" height="1" fill="#14600a"/><rect x="534" y="378" width="2" height="1" fill="#14600a"/><rect x="538" y="378" width="2" height="1" fill="#14600a"/><rect x="542" y="378" width="2" height="1" fill="#14600a"/><rect x="546" y="378" width="2" height="1" fill="#14600a"/><rect x="550" y="378" width="2" height="1" fill="#14600a"/><rect x="554" y="378" width="2" height="1" fill="#14600a"/><rect x="558" y="378" width="2" height="1" fill="#14600a"/><rect x="562" y="378" width="2" height="1" fill="#14600a"/><rect x="566" y="378" width="2" height="1" fill="#14600a"/><rect x="570" y="378" width="2" height="1" fill="#14600a"/><rect x="574" y="378" width="2" height="1" fill="#14600a"/><rect x="578" y="378" width="2" height="1" fill="#14600a"/><rect x="582" y="378" width="2" height="1" fill="#14600a"/><rect x="586" y="378" width="2" height="1" fill="#14600a"/><rect x="590" y="378" width="2" height="1" fill="#14600a"/><rect x="594" y="378" width="2" height="1" fill="#14600a"/><rect x="598" y="378" width="2" height="1" fill="#14600a"/><rect x="602" y="378" width="2" height="1" fill="#14600a"/><rect x="606" y="378" width="2" height="1" fill="#14600a"/><rect x="610" y="378" width="2" height="1" fill="#14600a"/><rect x="614" y="378" width="2" height="1" fill="#14600a"/><rect x="618" y="378" width="2" height="1" fill="#14600a"/><rect x="622" y="378" width="2" height="1" fill="#14600a"/><rect x="626" y="378" width="2" height="1" fill="#14600a"/><rect x="630" y="378" width="2" height="1" fill="#14600a"/><rect x="634" y="378" width="2" height="1" fill="#14600a"/><rect x="638" y="378" width="2" height="1" fill="#14600a"/><rect x="642" y="378" width="2" height="1" fill="#14600a"/><rect x="646" y="378" width="2" height="1" fill="#14600a"/><rect x="650" y="378" width="2" height="1" fill="#14600a"/><rect x="654" y="378" width="2" height="1" fill="#14600a"/><rect x="658" y="378" width="2" height="1" fill="#14600a"/><rect x="662" y="378" width="2" height="1" fill="#14600a"/><rect x="666" y="378" width="2" height="1" fill="#14600a"/><rect x="670" y="378" width="2" height="1" fill="#14600a"/><rect x="674" y="378" width="2" height="1" fill="#14600a"/><rect x="678" y="378" width="2" height="1" fill="#14600a"/><rect x="682" y="378" width="2" height="1" fill="#14600a"/><rect x="686" y="378" width="2" height="1" fill="#14600a"/><rect x="690" y="378" width="2" height="1" fill="#14600a"/><rect x="694" y="378" width="2" height="1" fill="#14600a"/><rect x="698" y="378" width="2" height="1" fill="#14600a"/><rect x="702" y="378" width="2" height="1" fill="#14600a"/><rect x="706" y="378" width="2" height="1" fill="#14600a"/><rect x="710" y="378" width="2" height="1" fill="#14600a"/><rect x="714" y="378" width="2" height="1" fill="#14600a"/><rect x="718" y="378" width="2" height="1" fill="#14600a"/><rect x="722" y="378" width="2" height="1" fill="#14600a"/><rect x="726" y="378" width="2" height="1" fill="#14600a"/><rect x="730" y="378" width="2" height="1" fill="#14600a"/><rect x="734" y="378" width="2" height="1" fill="#14600a"/><rect x="738" y="378" width="2" height="1" fill="#14600a"/><rect x="742" y="378" width="2" height="1" fill="#14600a"/><rect x="746" y="378" width="2" height="1" fill="#14600a"/><rect x="750" y="378" width="2" height="1" fill="#14600a"/><rect x="754" y="378" width="2" height="1" fill="#14600a"/><rect x="758" y="378" width="2" height="1" fill="#14600a"/><rect x="762" y="378" width="2" height="1" fill="#14600a"/><rect x="766" y="378" width="2" height="1" fill="#14600a"/><rect x="770" y="378" width="2" height="1" fill="#14600a"/><rect x="774" y="378" width="2" height="1" fill="#14600a"/><rect x="778" y="378" width="2" height="1" fill="#14600a"/><rect x="782" y="378" width="2" height="1" fill="#14600a"/><rect x="786" y="378" width="2" height="1" fill="#14600a"/><rect x="790" y="378" width="2" height="1" fill="#14600a"/><rect x="794" y="378" width="2" height="1" fill="#14600a"/><rect x="798" y="378" width="2" height="1" fill="#14600a"/><rect x="802" y="378" width="2" height="1" fill="#14600a"/><rect x="806" y="378" width="2" height="1" fill="#14600a"/><rect x="810" y="378" width="2" height="1" fill="#14600a"/><rect x="814" y="378" width="2" height="1" fill="#14600a"/><rect x="818" y="378" width="2" height="1" fill="#14600a"/><rect x="822" y="378" width="2" height="1" fill="#14600a"/><rect x="826" y="378" width="2" height="1" fill="#14600a"/><rect x="830" y="378" width="2" height="1" fill="#14600a"/><rect x="834" y="378" width="2" height="1" fill="#14600a"/><rect x="838" y="378" width="2" height="1" fill="#14600a"/><rect x="842" y="378" width="2" height="1" fill="#14600a"/><rect x="846" y="378" width="2" height="1" fill="#14600a"/><rect x="850" y="378" width="2" height="1" fill="#14600a"/><rect x="854" y="378" width="2" height="1" fill="#14600a"/><rect x="858" y="378" width="2" height="1" fill="#14600a"/><rect x="862" y="378" width="2" height="1" fill="#14600a"/><rect x="866" y="378" width="2" height="1" fill="#14600a"/><rect x="870" y="378" width="2" height="1" fill="#14600a"/><rect x="874" y="378" width="2" height="1" fill="#14600a"/><rect x="878" y="378" width="2" height="1" fill="#14600a"/><rect x="882" y="378" width="2" height="1" fill="#14600a"/><rect x="886" y="378" width="2" height="1" fill="#14600a"/><rect x="890" y="378" width="2" height="1" fill="#14600a"/><rect x="894" y="378" width="2" height="1" fill="#14600a"/><rect x="898" y="378" width="2" height="1" fill="#14600a"/><rect x="902" y="378" width="2" height="1" fill="#14600a"/><rect x="906" y="378" width="2" height="1" fill="#14600a"/><rect x="910" y="378" width="2" height="1" fill="#14600a"/><rect x="914" y="378" width="2" height="1" fill="#14600a"/><rect x="918" y="378" width="2" height="1" fill="#14600a"/><rect x="922" y="378" width="2" height="1" fill="#14600a"/><rect x="926" y="378" width="2" height="1" fill="#14600a"/><rect x="930" y="378" width="2" height="1" fill="#14600a"/><rect x="934" y="378" width="2" height="1" fill="#14600a"/><rect x="938" y="378" width="2" height="1" fill="#14600a"/><rect x="942" y="378" width="2" height="1" fill="#14600a"/><rect x="946" y="378" width="2" height="1" fill="#14600a"/><rect x="950" y="378" width="2" height="1" fill="#14600a"/><rect x="954" y="378" width="2" height="1" fill="#14600a"/><rect x="958" y="378" width="2" height="1" fill="#14600a"/><rect x="962" y="378" width="2" height="1" fill="#14600a"/><rect x="966" y="378" width="2" height="1" fill="#14600a"/><rect x="970" y="378" width="2" height="1" fill="#14600a"/><rect x="974" y="378" width="2" height="1" fill="#14600a"/><rect x="978" y="378" width="2" height="1" fill="#14600a"/><rect x="982" y="378" width="2" height="1" fill="#14600a"/><rect x="380" y="405" width="607" height="1"/><rect x="380" y="431" width="607" height="1"/><rect x="380" y="457" width="607" height="1"/><rect x="380" y="483" width="607" height="1"/><rect x="380" y="509" width="607" height="1"/><rect x="380" y="535" width="607" height="1"/><rect x="380" y="561" width="607" height="1"/><rect x="380" y="587" width="607" height="1"/><rect x="380" y="613" width="607" height="1"/><rect x="441" y="118" width="1" height="522"/><rect x="501" y="118" width="1" height="522"/><rect x="562" y="118" width="1" height="522"/><rect x="622" y="118" width="1" height="522"/><rect x="683" y="118" width="1" height="522"/><rect x="744" y="118" width="1" height="522"/><rect x="804" y="118" width="1" height="522"/><rect x="865" y="118" width="1" height="522"/><rect x="925" y="118" width="1" height="522"/></g>
<polyline points="380.6,343.0 394.3,430.6 408.0,377.0 421.8,334.2 435.5,422.1 449.2,393.5 462.9,329.1 476.6,411.4 490.4,408.2 504.1,328.1 517.8,397.8 531.5,420.2 545.2,333.4 559.0,378.5 572.7,429.2 586.4,342.3 600.1,367.3 613.8,433.0 627.6,352.7 641.3,353.3 655.0,433.0 668.7,365.9 682.4,341.3 696.2,428.5 709.9,383.0 723.6,332.4 737.3,419.2 751.0,395.0 764.8,328.1 778.5,406.4 792.2,410.0 805.9,328.1 819.6,391.4 833.4,421.3 847.1,333.4 860.8,378.0 874.5,429.2 888.2,343.8 902.0,362.6 915.7,432.5 929.4,354.5 943.1,349.0 956.8,431.3 970.6,368.7 984.3,337.3 998.0,411.8" fill="none" stroke="#ff0000" stroke-width="1" shape-rendering="crispEdges" clip-path="url(#plotclip)"/>
<polyline points="380.6,320.2 394.3,467.3 408.0,398.5 421.8,308.1 435.5,451.3 449.2,427.8 462.9,304.1 476.6,430.6 490.4,450.1 504.1,308.1 517.8,397.7 531.5,466.3 545.2,319.1 559.0,377.0 572.7,477.7 586.4,337.3 600.1,355.2 613.8,480.5 627.6,358.4 641.3,333.4 655.0,475.3 668.7,388.0 682.4,316.0 696.2,463.4 709.9,400.7 723.6,306.0 737.3,445.6 751.0,432.5 764.8,303.1 778.5,422.8 792.2,453.4 805.9,309.1 819.6,391.0 833.4,469.5 847.1,321.4 860.8,378.0 874.5,477.7 888.2,340.3 902.0,347.0 915.7,478.4 929.4,359.4 943.1,327.4 956.8,472.4 970.6,394.0 984.3,312.4 998.0,435.6" fill="none" stroke="#66ff00" stroke-width="1" shape-rendering="crispEdges" clip-path="url(#plotclip)"/>
<g fill="#ffff00"><polygon points="424.4,320.5 425.9,322.0 429.1,322.0 430.7,320.5 429.1,319.0 425.9,319.0"/><polygon points="422.6,320.5 421.1,322.0 417.9,322.0 416.3,320.5 417.9,319.0 421.1,319.0"/><polygon points="423.5,321.4 425.0,322.9 425.0,326.1 423.5,327.7 422.0,326.1 422.0,322.9"/><polygon points="423.5,319.6 425.0,318.1 425.0,314.9 423.5,313.3 422.0,314.9 422.0,318.1"/></g>
<text x="561.2" y="201" font-size="42" fill="#ff0000" letter-spacing="0.8">TX</text>
<text x="446" y="582.7" font-size="42" fill="#66ff00" textLength="166.5" lengthAdjust="spacingAndGlyphs">gate TR4</text>
<g shape-rendering="crispEdges" fill="#000"><rect x="380" y="641" width="1" height="6"/><rect x="386" y="641" width="1" height="3"/><rect x="392" y="641" width="1" height="3"/><rect x="398" y="641" width="1" height="3"/><rect x="404" y="641" width="1" height="3"/><rect x="410" y="641" width="1" height="3"/><rect x="417" y="641" width="1" height="3"/><rect x="423" y="641" width="1" height="3"/><rect x="429" y="641" width="1" height="3"/><rect x="435" y="641" width="1" height="3"/><rect x="441" y="641" width="1" height="6"/><rect x="447" y="641" width="1" height="3"/><rect x="453" y="641" width="1" height="3"/><rect x="459" y="641" width="1" height="3"/><rect x="465" y="641" width="1" height="3"/><rect x="471" y="641" width="1" height="3"/><rect x="477" y="641" width="1" height="3"/><rect x="483" y="641" width="1" height="3"/><rect x="489" y="641" width="1" height="3"/><rect x="495" y="641" width="1" height="3"/><rect x="501" y="641" width="1" height="6"/><rect x="507" y="641" width="1" height="3"/><rect x="513" y="641" width="1" height="3"/><rect x="519" y="641" width="1" height="3"/><rect x="525" y="641" width="1" height="3"/><rect x="532" y="641" width="1" height="3"/><rect x="538" y="641" width="1" height="3"/><rect x="544" y="641" width="1" height="3"/><rect x="550" y="641" width="1" height="3"/><rect x="556" y="641" width="1" height="3"/><rect x="562" y="641" width="1" height="6"/><rect x="568" y="641" width="1" height="3"/><rect x="574" y="641" width="1" height="3"/><rect x="580" y="641" width="1" height="3"/><rect x="586" y="641" width="1" height="3"/><rect x="592" y="641" width="1" height="3"/><rect x="598" y="641" width="1" height="3"/><rect x="604" y="641" width="1" height="3"/><rect x="610" y="641" width="1" height="3"/><rect x="616" y="641" width="1" height="3"/><rect x="622" y="641" width="1" height="6"/><rect x="628" y="641" width="1" height="3"/><rect x="634" y="641" width="1" height="3"/><rect x="640" y="641" width="1" height="3"/><rect x="646" y="641" width="1" height="3"/><rect x="652" y="641" width="1" height="3"/><rect x="659" y="641" width="1" height="3"/><rect x="665" y="641" width="1" height="3"/><rect x="671" y="641" width="1" height="3"/><rect x="677" y="641" width="1" height="3"/><rect x="683" y="641" width="1" height="6"/><rect x="689" y="641" width="1" height="3"/><rect x="695" y="641" width="1" height="3"/><rect x="701" y="641" width="1" height="3"/><rect x="707" y="641" width="1" height="3"/><rect x="714" y="641" width="1" height="3"/><rect x="720" y="641" width="1" height="3"/><rect x="726" y="641" width="1" height="3"/><rect x="732" y="641" width="1" height="3"/><rect x="738" y="641" width="1" height="3"/><rect x="744" y="641" width="1" height="6"/><rect x="750" y="641" width="1" height="3"/><rect x="756" y="641" width="1" height="3"/><rect x="762" y="641" width="1" height="3"/><rect x="768" y="641" width="1" height="3"/><rect x="774" y="641" width="1" height="3"/><rect x="780" y="641" width="1" height="3"/><rect x="786" y="641" width="1" height="3"/><rect x="792" y="641" width="1" height="3"/><rect x="798" y="641" width="1" height="3"/><rect x="804" y="641" width="1" height="6"/><rect x="810" y="641" width="1" height="3"/><rect x="816" y="641" width="1" height="3"/><rect x="822" y="641" width="1" height="3"/><rect x="828" y="641" width="1" height="3"/><rect x="834" y="641" width="1" height="3"/><rect x="841" y="641" width="1" height="3"/><rect x="847" y="641" width="1" height="3"/><rect x="853" y="641" width="1" height="3"/><rect x="859" y="641" width="1" height="3"/><rect x="865" y="641" width="1" height="6"/><rect x="871" y="641" width="1" height="3"/><rect x="877" y="641" width="1" height="3"/><rect x="883" y="641" width="1" height="3"/><rect x="889" y="641" width="1" height="3"/><rect x="895" y="641" width="1" height="3"/><rect x="901" y="641" width="1" height="3"/><rect x="907" y="641" width="1" height="3"/><rect x="913" y="641" width="1" height="3"/><rect x="919" y="641" width="1" height="3"/><rect x="925" y="641" width="1" height="6"/><rect x="931" y="641" width="1" height="3"/><rect x="937" y="641" width="1" height="3"/><rect x="943" y="641" width="1" height="3"/><rect x="949" y="641" width="1" height="3"/><rect x="956" y="641" width="1" height="3"/><rect x="962" y="641" width="1" height="3"/><rect x="968" y="641" width="1" height="3"/><rect x="974" y="641" width="1" height="3"/><rect x="980" y="641" width="1" height="3"/><rect x="986" y="641" width="1" height="6"/></g>
<text x="377.25" y="658.6" font-size="12" font-weight="700" fill="#000" textLength="6.5" lengthAdjust="spacingAndGlyphs">0</text>
<text x="427.75" y="658.6" font-size="12" font-weight="700" fill="#000" textLength="27.5" lengthAdjust="spacingAndGlyphs">100u</text>
<text x="487.75" y="658.6" font-size="12" font-weight="700" fill="#000" textLength="27.5" lengthAdjust="spacingAndGlyphs">200u</text>
<text x="548.75" y="658.6" font-size="12" font-weight="700" fill="#000" textLength="27.5" lengthAdjust="spacingAndGlyphs">300u</text>
<text x="608.75" y="658.6" font-size="12" font-weight="700" fill="#000" textLength="27.5" lengthAdjust="spacingAndGlyphs">400u</text>
<text x="669.75" y="658.6" font-size="12" font-weight="700" fill="#000" textLength="27.5" lengthAdjust="spacingAndGlyphs">500u</text>
<text x="730.75" y="658.6" font-size="12" font-weight="700" fill="#000" textLength="27.5" lengthAdjust="spacingAndGlyphs">600u</text>
<text x="790.75" y="658.6" font-size="12" font-weight="700" fill="#000" textLength="27.5" lengthAdjust="spacingAndGlyphs">700u</text>
<text x="851.75" y="658.6" font-size="12" font-weight="700" fill="#000" textLength="27.5" lengthAdjust="spacingAndGlyphs">800u</text>
<text x="911.75" y="658.6" font-size="12" font-weight="700" fill="#000" textLength="27.5" lengthAdjust="spacingAndGlyphs">900u</text>
<text x="977.5" y="658.6" font-size="12" font-weight="700" fill="#000" textLength="17" lengthAdjust="spacingAndGlyphs">1m</text>
<text x="657.5" y="676" font-size="12" font-weight="700" fill="#000" textLength="56.5" lengthAdjust="spacingAndGlyphs">Time [sec]</text>
<text x="910" y="674" font-size="12" font-weight="700" fill="#000" textLength="23.5" lengthAdjust="spacingAndGlyphs">Grid</text>
<path d="M943.5999999999999,669.8 L945.9,672.6 L950.1999999999999,665.8" fill="none" stroke="#3c5598" stroke-width="1.9" stroke-linejoin="miter"/>
<text x="380.5" y="696" font-size="12" font-weight="700" fill="#000" textLength="47.5" lengthAdjust="spacingAndGlyphs">Measure</text>
<text x="392" y="716.8" font-size="12" font-weight="700" fill="#1446e6" textLength="33.5" lengthAdjust="spacingAndGlyphs">status</text>
<path d="M465.4,713.2 L478.0,713.2 L471.7,721.2 Z" fill="#c4c4c4" stroke="none"/>
<path d="M465.4,713.2 L478.0,713.2 L471.7,721.2" fill="none" stroke="#555" stroke-width="1"/>
<path d="M471.7,721.2 L465.4,713.2" fill="none" stroke="#e4e4e4" stroke-width="1"/>
<text x="692.5" y="712" font-size="12" font-weight="700" fill="#000" textLength="113.5" lengthAdjust="spacingAndGlyphs">Trigger: AUTO - CH1</text>
</svg>
</body></html>
